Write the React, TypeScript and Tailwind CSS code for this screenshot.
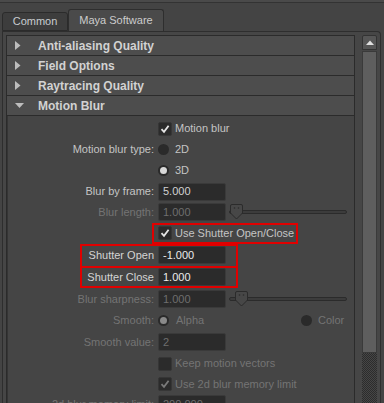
import React from "react";

const font = { fontFamily: '"Liberation Sans", Arial, sans-serif' };

function Check({ disabled }: { disabled?: boolean }) {
  return (
    <svg width="10" height="10" viewBox="0 0 10 10">
      <path d="M1.5 5.2 L4 7.8 L8.6 1.8" fill="none" stroke={disabled ? "#7a7a7a" : "#e6e6e6"} strokeWidth="1.8" />
    </svg>
  );
}

function CheckBox({ checked, disabled }: { checked?: boolean; disabled?: boolean }) {
  return (
    <div className="w-[14px] h-[14px] rounded-[2px] bg-[#2b2b2b] border border-[#363636] flex items-center justify-center shrink-0">
      {checked && <Check disabled={disabled} />}
    </div>
  );
}

function Radio({ on, disabled }: { on?: boolean; disabled?: boolean }) {
  return (
    <div className="w-[11px] h-[11px] rounded-full bg-[#2a2a2a] flex items-center justify-center shrink-0">
      {on && <div className={"w-[7px] h-[7px] rounded-full " + (disabled ? "bg-[#8a8a8a]" : "bg-[#d8d8d8]")} />}
    </div>
  );
}

function Field({ value, color }: { value: string; color: string }) {
  return (
    <div className="w-[68px] h-[18px] rounded-[2px] bg-[#2b2b2b] border border-[#3a3a3a] flex items-center pl-[4px] shrink-0">
      <span className={"text-[11px] leading-none " + color}>{value}</span>
    </div>
  );
}

function Slider({ handle }: { handle: string }) {
  return (
    <div className="relative ml-[3px] w-[118px] h-[16px] flex items-center">
      <div className="w-full h-[4px] rounded-[2px] bg-[#3c3c3c] border border-[#2b2b2b]" />
      <svg className={"absolute top-0 " + handle} width="13" height="16" viewBox="0 0 13 16">
        <path d="M2 0.5 H11 Q12.5 0.5 12.5 2 V9 L6.5 15 L0.5 9 V2 Q0.5 0.5 2 0.5 Z" fill="#474747" stroke="#2b2b2b" />
        <circle cx="4.5" cy="4" r="0.8" fill="#2b2b2b" />
        <circle cx="8.5" cy="4" r="0.8" fill="#2b2b2b" />
      </svg>
    </div>
  );
}

function Row({ h, label, dim, bright, box, children }: { h: string; label?: string; dim?: boolean; bright?: boolean; box?: string; children?: React.ReactNode }) {
  return (
    <div className={"relative flex items-center shrink-0 " + h}>
      <div className={"w-[146px] text-right text-[11px] leading-none whitespace-nowrap " + (dim ? "text-[#747474]" : bright ? "text-[#d4d4d4]" : "text-[#c4c4c4]")}>
        {label}
      </div>
      <div className="ml-[4px] flex items-center">{children}</div>
      {box && <div className={"absolute pointer-events-none border-2 border-[#e00000] " + box} />}
    </div>
  );
}

function Header({ title, open }: { title: string; open?: boolean }) {
  return (
    <div className="h-[20px] shrink-0 flex items-center bg-[#4d4d4d] border-b border-[#2b2b2b]">
      <div className="w-[31px] flex items-center justify-start pl-[8px]">
        {open ? (
          <svg width="9" height="6" viewBox="0 0 9 6">
            <path d="M0 0 H9 L4.5 5 Z" fill="#bdbdbd" />
          </svg>
        ) : (
          <svg width="6" height="9" viewBox="0 0 6 9">
            <path d="M0 0 L5.5 4.5 L0 9 Z" fill="#bdbdbd" />
          </svg>
        )}
      </div>
      <span className="text-[12px] font-bold text-[#d2d2d2] leading-none">{title}</span>
    </div>
  );
}

export default function App() {
  return (
    <div className="w-[384px] h-[403px] bg-[#444444] overflow-hidden flex flex-col" style={font}>
      <div className="h-[3px] shrink-0 bg-[#4a4a4a] border-b border-[#333333]" />
      <div className="h-[28px] shrink-0 flex items-end pl-[2px]">
        <div className="w-[66px] h-[19px] rounded-t-[3px] bg-[#3d3d3d] border border-[#2b2b2b] flex items-center justify-center">
          <span className="text-[11px] text-[#c8ccd0] leading-none">Common</span>
        </div>
        <div className="w-[96px] h-[22px] rounded-t-[3px] bg-[#4a4a4a] border border-b-0 border-[#2e2e2e] flex items-center justify-center">
          <span className="text-[11px] text-[#cccccc] leading-none">Maya Software</span>
        </div>
      </div>
      <div className="flex-1 min-h-0 ml-[2px] mr-[3px] border-l border-t border-r border-[#2e2e2e] rounded-tr-[4px] bg-[#464646] pt-[3px] pl-[3px] flex">
        <div className="w-[348px] border-l border-t border-[#2b2b2b] flex flex-col">
          <Header title="Anti-aliasing Quality" />
          <Header title="Field Options" />
          <Header title="Raytracing Quality" />
          <Header title="Motion Blur" open />
          <div className="flex-1 min-h-0 border-l border-[#353535] bg-[#454545] flex flex-col pt-[2px] overflow-hidden">
            <Row h="h-[21px]">
              <CheckBox checked />
              <span className="ml-[3px] text-[11px] text-[#c4c4c4] leading-none">Motion blur</span>
            </Row>
            <Row h="h-[21px]" label="Motion blur type:">
              <Radio />
              <span className="ml-[6px] text-[11px] text-[#c4c4c4] leading-none">2D</span>
            </Row>
            <Row h="h-[21px]">
              <Radio on />
              <span className="ml-[6px] text-[11px] text-[#c4c4c4] leading-none">3D</span>
            </Row>
            <Row h="h-[21px]" label="Blur by frame:">
              <Field value="5.000" color="text-[#d2d2d2]" />
            </Row>
            <Row h="h-[20px]" label="Blur length:" dim>
              <Field value="1.000" color="text-[#6e6e6e]" />
              <Slider handle="left-[1px]" />
            </Row>
            <Row h="h-[22px]" box="left-[144px] top-[1px] w-[146px] h-[21px]">
              <CheckBox checked />
              <span className="ml-[3px] text-[11px] text-[#c4c4c4] leading-none">Use Shutter Open/Close</span>
            </Row>
            <Row h="h-[22px]" label="Shutter Open" bright box="left-[72px] top-[0px] w-[158px] h-[24px]">
              <Field value="-1.000" color="text-[#ececec]" />
            </Row>
            <Row h="h-[22px]" label="Shutter Close" bright box="left-[72px] top-[0px] w-[158px] h-[22px]">
              <Field value="1.000" color="text-[#ececec]" />
            </Row>
            <Row h="h-[22px]" label="Blur sharpness:" dim>
              <Field value="1.000" color="text-[#6e6e6e]" />
              <Slider handle="left-[6px]" />
            </Row>
            <Row h="h-[21px]" label="Smooth:" dim>
              <Radio on disabled />
              <span className="ml-[7px] text-[11px] text-[#747474] leading-none w-[125px]">Alpha</span>
              <Radio />
              <span className="ml-[6px] text-[11px] text-[#747474] leading-none">Color</span>
            </Row>
            <Row h="h-[22px]" label="Smooth value:" dim>
              <Field value="2" color="text-[#6e6e6e]" />
            </Row>
            <Row h="h-[21px]">
              <CheckBox />
              <span className="ml-[3px] text-[11px] text-[#747474] leading-none">Keep motion vectors</span>
            </Row>
            <Row h="h-[20px]">
              <CheckBox checked disabled />
              <span className="ml-[3px] text-[11px] text-[#747474] leading-none">Use 2d blur memory limit</span>
            </Row>
            <Row h="h-[20px]" label="2d blur memory limit:" dim>
              <Field value="200.000" color="text-[#6e6e6e]" />
            </Row>
          </div>
        </div>
        <div className="w-[8px] border-l border-[#2b2b2b]" />
        <div className="w-[15px] flex flex-col">
          <div className="h-[15px] shrink-0 rounded-t-[2px] bg-[#565656] border border-[#333333] flex items-center justify-center">
            <svg width="8" height="5" viewBox="0 0 8 5">
              <path d="M0 5 L4 0.5 L8 5 Z" fill="#e0e0e0" />
            </svg>
          </div>
          <div className="h-[302px] shrink-0 mt-[1px] bg-[#5e5e5e] border border-[#3a3a3a]" />
          <div className="flex-1 bg-[repeating-conic-gradient(#2c2c2c_0%_25%,#464646_0%_50%)] bg-[length:2px_2px]" />
        </div>
      </div>
    </div>
  );
}
